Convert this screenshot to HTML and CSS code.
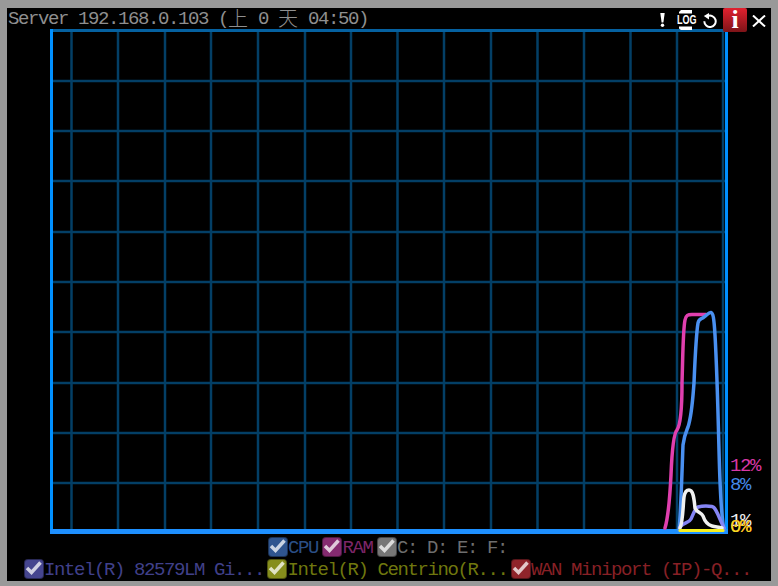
FILE: index.html
```html
<!DOCTYPE html>
<html lang="zh">
<head>
<meta charset="utf-8">
<title>Server</title>
<link rel="stylesheet" href="styles.css">
</head>
<body>
<main class="window">
  <header class="titlebar">
    <h1 class="title">Server 192.168.0.103 (<span class="cjk">上</span> 0 <span class="cjk">天</span> 04:50)</h1>
    <div class="tools">
      <svg class="tool tool-alert" viewBox="0 0 5 14"><path d="M.3 0h4.400L3.400 9.500H1.600z" fill="#fff"/><circle cx="2.500" cy="12.300" r="1.700" fill="#fff"/></svg>
      <svg class="tool tool-log" viewBox="0 0 20 20"><path d="M4 0h11v3.500H2V2zM2 16.500h13V20H4l-2-1.500z" fill="#fff"/><text x="0" y="14" class="log-text" textLength="19.500" lengthAdjust="spacingAndGlyphs">LOG</text></svg>
      <svg class="tool tool-undo" viewBox="0 0 15 15"><path d="M4.500 3.200a5.700 5.700 0 1 1-3.200 5" fill="none" stroke="#fff" stroke-width="2"/><path d="M6 0v6.500L.8 3z" fill="#fff"/></svg>
      <div class="tool-info">i</div>
      <svg class="tool tool-close" viewBox="0 0 14 12"><path d="M1 .5l12 11M13 .5l-12 11" stroke="#fff" stroke-width="2"/></svg>
    </div>
  </header>
  <div class="chart-wrap">
    <svg class="chart" viewBox="0 0 778 586" width="778" height="586">
      <g class="grid">
        <path d="M71.500 30V530M118 30V530M165 30V530M211 30V530M258 30V530M305 30V530M351 30V530M397.500 30V530M444 30V530M491 30V530M537.500 30V530M584 30V530M630.500 30V530M677 30V530M723 30V530"/>
        <path d="M52 81H726M52 131H726M52 181H726M52 232H726M52 282H726M52 332H726M52 383H726M52 433H726M52 483H726"/>
      </g>
      <path class="frame-top" d="M50 30.500H726"/>
      <path class="frame-side" d="M51.500 29V534M726.500 29V534"/>
      <path class="frame-bottom" d="M50 531.500H728"/>
      <path class="line pink" d="M665 528C668 518 670 495 671 475C672 450 674 433 677 430C681 424 682 400 682 383C683 350 683 330 685 320C686 315 688 314.500 692 314.500H706"/>
      <path class="line blue" d="M679 530C681 510 682 470 683 445C684 436 686 432 688 427C692 415 693 395 694 383C695 360 696 335 698 323C699 318 702 319 704 317C707 315 709 312 711 312.500C713 313 714 318 715 335C717 370 718 410 719 450C720 490 721 515 724 530"/>
      <path class="line violet" d="M680 527C684 522 689 523 691 519C693 515 695 508 698 507C702 506 708 506 712 506.500C716 507 719 518 724 528"/>
      <path class="line white" d="M680 528C683 522 683 505 684 497C685 491 687 490 689 490C693 490 694 497 695 508C697 513 701 512 703 516C705 522 708 525 712 526C716 527 719 527 722 528"/>
      <path class="line yellow" d="M680 530.500H723"/>
    </svg>
    <span class="value value-ram">12%</span>
    <span class="value value-cpu">8%</span>
    <span class="value value-a">1%</span>
    <span class="value value-b">0%</span>
    <span class="value value-c">0%</span>
  </div>
  <div class="legend legend-main">
    <label class="item"><span class="box box-cpu"><svg viewBox="0 0 18 18"><path d="M2 8l4.500 4.500L15.500 2.500"/></svg></span><span class="name name-cpu">CPU</span></label>
    <label class="item"><span class="box box-ram"><svg viewBox="0 0 18 18"><path d="M2 8l4.500 4.500L15.500 2.500"/></svg></span><span class="name name-ram">RAM</span></label>
    <label class="item"><span class="box box-disk"><svg viewBox="0 0 18 18"><path d="M2 8l4.500 4.500L15.500 2.500"/></svg></span><span class="name name-disk">C: D: E: F:</span></label>
  </div>
  <div class="legend legend-net">
    <label class="item"><span class="box box-net1"><svg viewBox="0 0 18 18"><path d="M2 8l4.500 4.500L15.500 2.500"/></svg></span><span class="name name-net1">Intel(R) 82579LM Gi...</span></label>
    <label class="item"><span class="box box-net2"><svg viewBox="0 0 18 18"><path d="M2 8l4.500 4.500L15.500 2.500"/></svg></span><span class="name name-net2">Intel(R) Centrino(R...</span></label>
    <label class="item"><span class="box box-net3"><svg viewBox="0 0 18 18"><path d="M2 8l4.500 4.500L15.500 2.500"/></svg></span><span class="name name-net3">WAN Miniport (IP)-Q...</span></label>
  </div>
</main>
</body>
</html>
```
FILE: styles.css
```css
html, body {
  margin: 0;
  height: 100%;
  background: #999;
  overflow: hidden;
}
.window {
  box-sizing: border-box;
  width: 764px;
  height: 573px;
  margin: 8px 7px 5px;
  padding-bottom: 1px;
  background: #000;
  display: flex;
  flex-direction: column;
  font-family: "Liberation Mono", "Noto Sans CJK SC", monospace;
  font-size: 19px;
  letter-spacing: -1.4px;
  position: relative;
}
.titlebar {
  height: 21px;
  display: flex;
  justify-content: space-between;
  align-items: flex-start;
}
.title {
  margin: 0 0 0 1px;
  font: inherit;
  line-height: 22px;
  color: #8f8f8f;
  white-space: pre;
}
.cjk {
  font-family: "Noto Sans CJK SC", sans-serif;
  font-size: 20px;
  font-weight: 300;
  letter-spacing: 0;
  line-height: 20px;
  display: inline-block;
  vertical-align: top;
}
.tools {
  display: flex;
  align-items: flex-start;
  position: relative;
  z-index: 2;
  margin-right: 5px;
}
.tool { display: block; }
.tool-alert { width: 5px; height: 14px; margin: 5px 0 0 0; }
.tool-log { width: 20px; height: 20px; margin: 2px 0 0 12px; overflow: visible; }
.log-text {
  font: bold 12.500px "Liberation Sans", sans-serif;
  letter-spacing: 0;
  fill: #fff;
}
.tool-undo { width: 15px; height: 15px; margin: 5px 0 0 6px; }
.tool-info {
  width: 24px;
  height: 24px;
  margin-left: 5px;
  background: linear-gradient(#e0212f, #7d1418);
  color: #fff;
  border-radius: 2px;
  font: bold 26px/24px "Liberation Serif", serif;
  letter-spacing: 0;
  text-align: center;
}
.tool-close { width: 14px; height: 12px; margin: 7px 0 0 5px; }
.chart-wrap {
  flex: 1;
  position: relative;
  min-height: 0;
}
.chart {
  position: absolute;
  left: -7px;
  top: -29px;
}
.grid path { fill: none; stroke: #033f66; stroke-width: 2.500; }
.frame-top { stroke: #0561a0; stroke-width: 3; fill: none; }
.frame-side { stroke: #0090ff; stroke-width: 3; fill: none; }
.frame-bottom { stroke: #1e90ff; stroke-width: 5; fill: none; }
.line { fill: none; stroke-width: 3.500; stroke-linecap: round; stroke-linejoin: round; }
.pink { stroke: #e03fae; }
.blue { stroke: #4a90f0; }
.violet { stroke: #8585f5; }
.white { stroke: #f0f0f0; }
.yellow { stroke: #f5f020; stroke-width: 3; }
.value { position: absolute; line-height: 18px; left: 723px; }
.value-ram { top: 428px; color: #d838a6; }
.value-cpu { top: 447px; color: #4488e8; }
.value-a { top: 483px; color: #eee; }
.value-b { top: 489px; color: #ff3030; }
.value-c { top: 489px; color: #f0e020; }
.legend {
  display: flex;
  justify-content: center;
  height: 22px;
  align-items: center;
  padding-right: 3px;
  white-space: pre;
}
.legend-main { gap: 4.500px; }
.legend-net { gap: 3.500px; }
.item { display: flex; align-items: center; }
.box {
  width: 20px;
  height: 20px;
  border-radius: 4px;
  box-sizing: border-box;
  border: 1px solid #0006;
}
.box svg { display: block; width: 18px; height: 18px; fill: none; stroke: #fff; stroke-opacity: .75; stroke-width: 3.500; }
.box-cpu { background: #2f558f; }
.box-ram { background: #852a70; }
.box-disk { background: #767676; }
.box-net1 { background: #45458f; }
.box-net2 { background: #858d1c; }
.box-net3 { background: #90242a; }
.name { position: relative; top: 1px; }
.name-cpu { color: #2b4f86; }
.name-ram { color: #7d2669; }
.name-disk { color: #6e6e6e; }
.name-net1 { color: #40408a; }
.name-net2 { color: #6f770e; }
.name-net3 { color: #882026; }
```
